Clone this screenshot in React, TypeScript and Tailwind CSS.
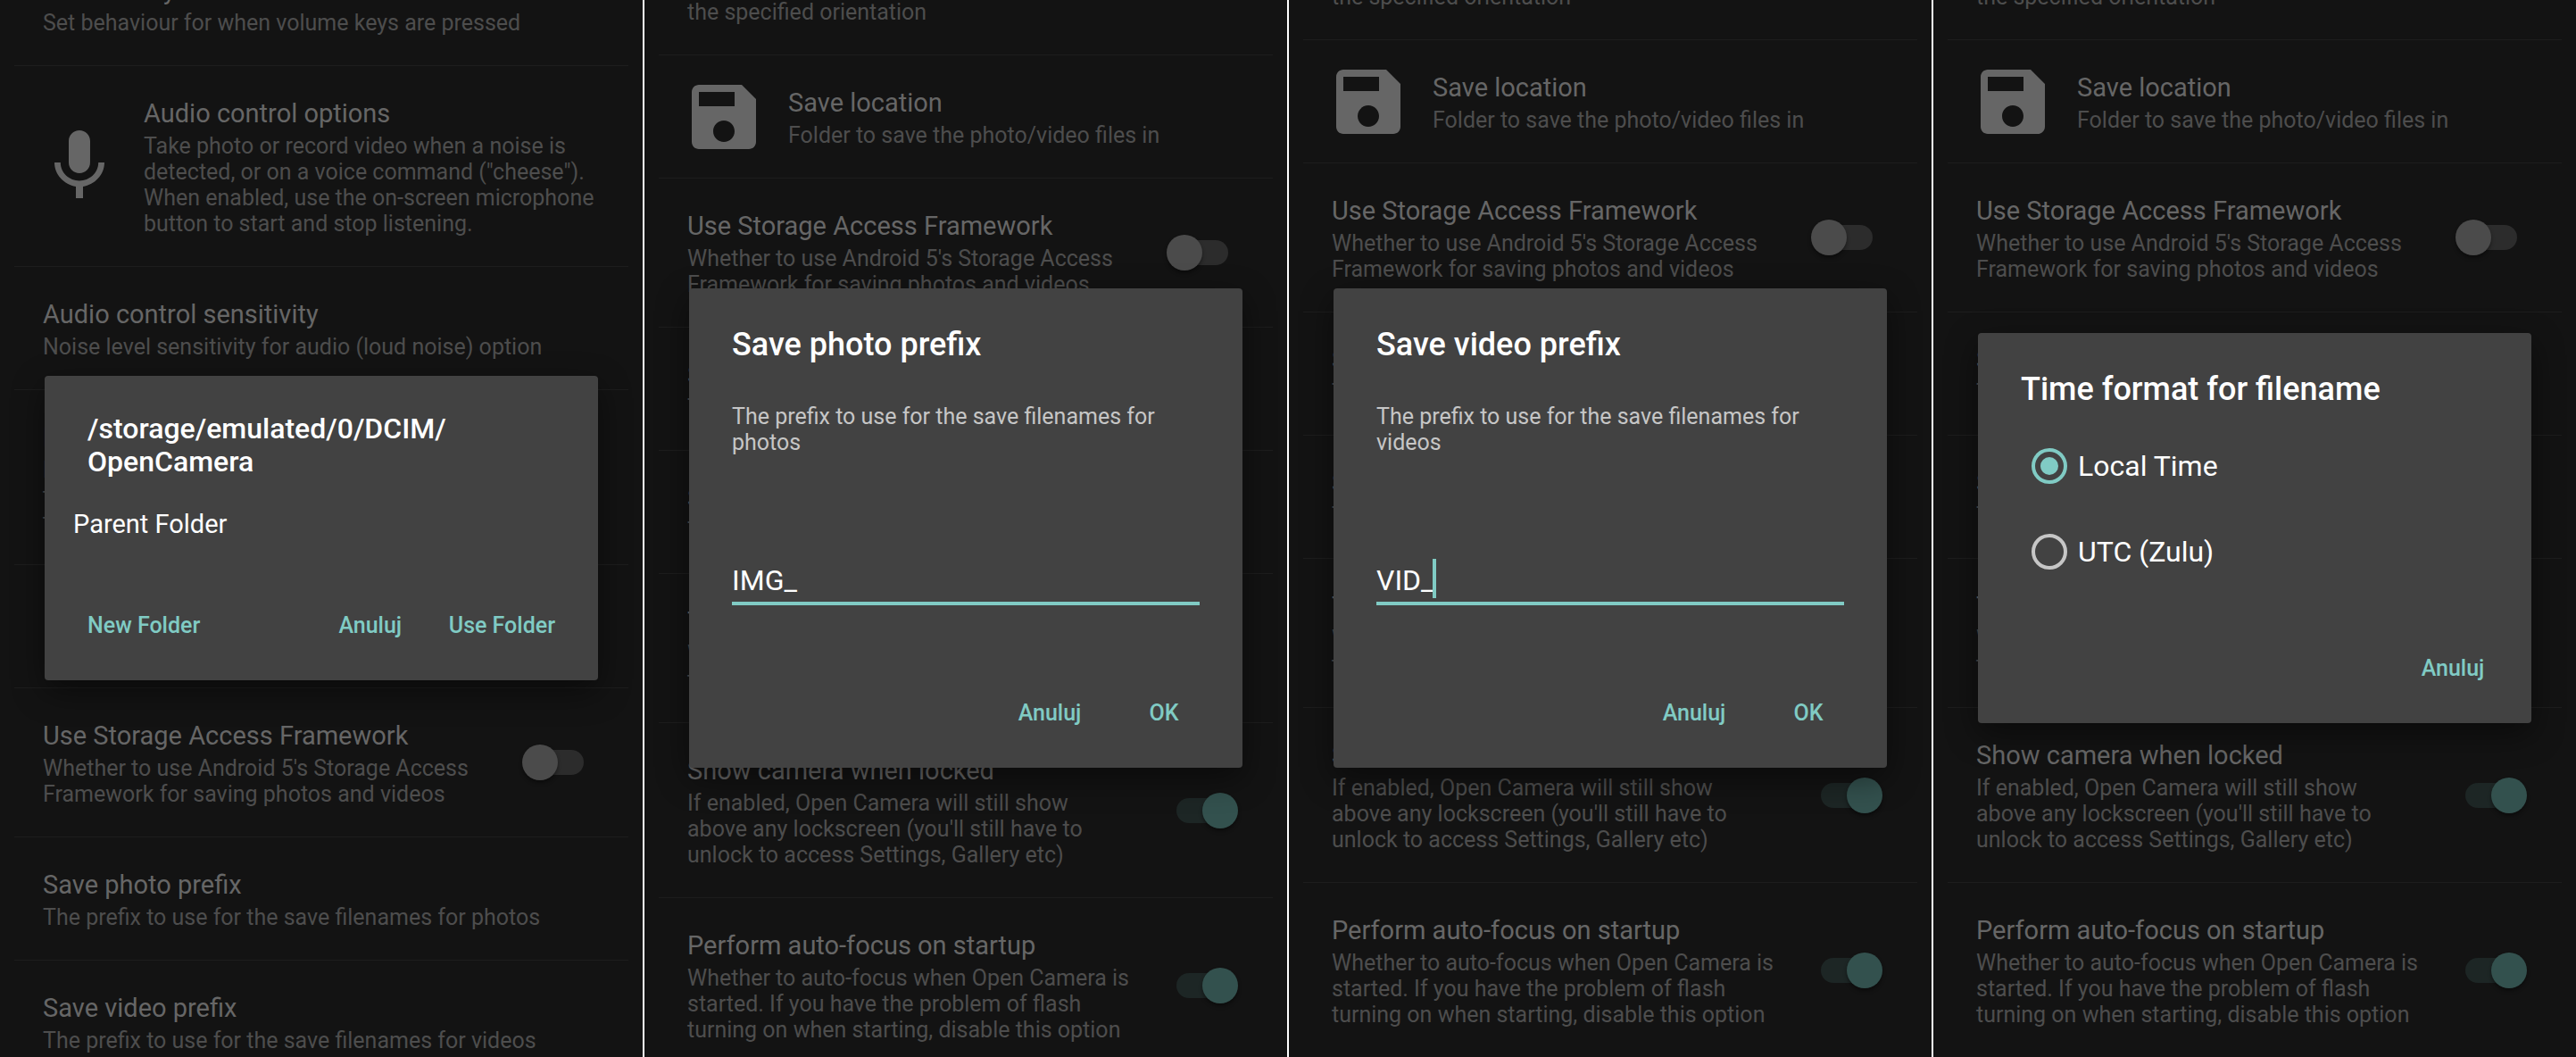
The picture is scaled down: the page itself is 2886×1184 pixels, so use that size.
import { useId, type ReactNode } from "react";

type Row = {
  title: string;
  summary: string;
  icon?: "mic" | "save";
  checked?: boolean;
};

const MIC =
  "M12 14c1.66 0 2.99-1.34 2.99-3L15 5c0-1.66-1.34-3-3-3S9 3.34 9 5v6c0 1.66 1.34 3 3 3zm5.3-3c0 3-2.54 5.1-5.3 5.1S6.7 14 6.7 11H5c0 3.41 2.72 6.23 6 6.72V21h2v-3.28c3.28-.48 6-3.3 6-6.72h-1.7z";
const SAVE =
  "M17 3H5c-1.11 0-2 .9-2 2v14c0 1.1.89 2 2 2h14c1.1 0 2-.9 2-2V7l-4-4zm-5 16c-1.66 0-3-1.34-3-3s1.34-3 3-3 3 1.34 3 3-1.34 3-3 3zm3-10H5V5h10v4z";

const orientation: Row = {
  title: "Lock photo/video orientation",
  summary:
    "Photos and videos will be recorded as if\nthe device were being held in\nthe specified orientation",
};
const saveLocation: Row = {
  title: "Save location",
  summary: "Folder to save the photo/video files in",
  icon: "save",
};
const storageAccess: Row = {
  title: "Use Storage Access Framework",
  summary:
    "Whether to use Android 5's Storage Access Framework for saving photos and videos",
  checked: false,
};
const photoPrefix: Row = {
  title: "Save photo prefix",
  summary: "The prefix to use for the save filenames for photos",
};
const videoPrefix: Row = {
  title: "Save video prefix",
  summary: "The prefix to use for the save filenames for videos",
};

const audioRows: Row[] = [
  { title: "Volume keys", summary: "Set behaviour for when volume keys are pressed" },
  {
    title: "Audio control options",
    summary:
      'Take photo or record video when a noise is detected, or on a voice command ("cheese"). When enabled, use the on-screen microphone button to start and stop listening.',
    icon: "mic",
  },
  {
    title: "Audio control sensitivity",
    summary: "Noise level sensitivity for audio (loud noise) option",
  },
  orientation,
  saveLocation,
  storageAccess,
  photoPrefix,
  videoPrefix,
];

const savingRows: Row[] = [
  orientation,
  saveLocation,
  storageAccess,
  photoPrefix,
  videoPrefix,
  {
    title: "Time format for filename",
    summary: "Whether to use local time or UTC for\nthe save filenames",
  },
  {
    title: "Show camera when locked",
    summary:
      "If enabled, Open Camera will still show above any lockscreen (you'll still have to unlock to access Settings, Gallery etc)",
    checked: true,
  },
  {
    title: "Perform auto-focus on startup",
    summary:
      "Whether to auto-focus when Open Camera is started. If you have the problem of flash turning on when starting, disable this option",
    checked: true,
  },
];

function Switch({ id, checked }: { id: string; checked: boolean }) {
  return (
    <span className="relative flex h-10 w-20 shrink-0 items-center px-[11px]">
      <input
        id={id}
        type="checkbox"
        role="switch"
        defaultChecked={checked}
        className="peer absolute inset-0 appearance-none"
      />
      <span className="h-7 w-full rounded-full bg-[#2c2c2c] peer-checked:bg-[#1d2625]" />
      <span className="pointer-events-none absolute left-0 size-10 rounded-full bg-[#4b4b4b] shadow-[0_3px_4px_rgba(0,0,0,0.4)] peer-checked:right-0 peer-checked:left-auto peer-checked:bg-[#33514e]" />
    </span>
  );
}

function Preference({ row }: { row: Row }) {
  const id = useId();
  const hasSwitch = row.checked !== undefined;
  return (
    <li
      className={`flex items-center border-t border-[#1d1d1d] ${row.icon ? "pl-[25px]" : "pl-8"} ${hasSwitch ? "pr-[39px]" : "pr-4"}`}
    >
      {row.icon && (
        <svg viewBox="0 0 24 24" className="mr-6 size-24 shrink-0 fill-[#666666]" aria-hidden="true">
          <path d={row.icon === "mic" ? MIC : SAVE} />
        </svg>
      )}
      <div className="min-w-0 grow pt-9 pb-[33px]">
        {hasSwitch ? (
          <label htmlFor={id} className="block text-[29px] leading-[34px] text-[#666666]">
            {row.title}
          </label>
        ) : (
          <h3 className="text-[29px] leading-[34px] text-[#666666]">{row.title}</h3>
        )}
        <p
          className={`mt-[5px] text-[25px] leading-[29px] whitespace-pre-line text-[#4d4d4d] ${hasSwitch ? "pr-10" : ""}`}
        >
          {row.summary}
        </p>
      </div>
      {hasSwitch && <Switch id={id} checked={!!row.checked} />}
    </li>
  );
}

function Screen({
  rows,
  scroll = "",
  children,
}: {
  rows: Row[];
  scroll?: string;
  children: ReactNode;
}) {
  return (
    <section className="relative flex h-full min-w-0 flex-col justify-end overflow-hidden bg-[#131313]">
      <ul className={`px-4 ${scroll}`}>
        {rows.map((row) => (
          <Preference key={row.title} row={row} />
        ))}
      </ul>
      <div className="absolute inset-0 flex items-center px-[50px] pb-px">{children}</div>
    </section>
  );
}

function Dialog({ label, children }: { label: string; children: ReactNode }) {
  return (
    <div
      role="dialog"
      aria-label={label}
      className="flex w-full flex-col rounded bg-[#424242] pb-[26px] text-white shadow-[0_12px_36px_rgba(0,0,0,0.45)]"
    >
      {children}
    </div>
  );
}

function DialogTitle({ children }: { children: ReactNode }) {
  return <h2 className="px-12 pt-[42px] text-[36px] leading-[42px] font-medium">{children}</h2>;
}

function DialogButton({ children, className = "" }: { children: ReactNode; className?: string }) {
  return (
    <button
      type="button"
      className={`h-18 min-w-32 px-6 text-[25px] leading-[29px] font-medium text-[#80cbc4] ${className}`}
    >
      {children}
    </button>
  );
}

function PrefixDialog({
  title,
  message,
  value,
  caret,
}: {
  title: string;
  message: string;
  value: string;
  caret?: boolean;
}) {
  const id = useId();
  return (
    <Dialog label={title}>
      <DialogTitle>{title}</DialogTitle>
      <label htmlFor={id} className="mt-[45px] px-12 text-[25px] leading-[29px] text-[#c6c6c6]">
        {message}
      </label>
      <div className="relative mx-12 mt-29 flex">
        <input
          id={id}
          type="text"
          defaultValue={value}
          className="h-[52px] w-full border-b-4 border-[#80cbc4] bg-transparent text-[32px] outline-none"
        />
        {caret && <span className="absolute top-0 left-[63px] h-11 w-1 bg-[#80cbc4]" />}
      </div>
      <div className="mt-21 flex justify-end px-6">
        <DialogButton>Anuluj</DialogButton>
        <DialogButton>OK</DialogButton>
      </div>
    </Dialog>
  );
}

function TimeOption({ label, checked }: { label: string; checked?: boolean }) {
  return (
    <label className="flex h-24 items-center gap-3 text-[32px]">
      <input
        type="radio"
        name="time-format"
        defaultChecked={checked}
        className="flex size-10 appearance-none items-center justify-center rounded-full border-4 border-[#c6c6c6] before:size-5 before:rounded-full checked:border-[#80cbc4] checked:before:bg-[#80cbc4]"
      />
      {label}
    </label>
  );
}

export default function App() {
  return (
    <main className="grid h-screen grid-cols-4 gap-0.5 overflow-hidden bg-white font-['Roboto',sans-serif]">
      <Screen rows={audioRows} scroll="-mb-[29px]">
        <Dialog label="Choose folder">
          <h2 className="px-12 pt-[41px] text-[32px] leading-[37px] font-medium">
            /storage/emulated/0/DCIM/
            <wbr />
            OpenCamera
          </h2>
          <button type="button" className="mt-1 h-24 px-8 text-left text-[29px]">
            Parent Folder
          </button>
          <div className="mt-7 flex px-6">
            <DialogButton className="mr-auto">New Folder</DialogButton>
            <DialogButton>Anuluj</DialogButton>
            <DialogButton>Use Folder</DialogButton>
          </div>
        </Dialog>
      </Screen>
      <Screen rows={savingRows} scroll="-mb-[17px]">
        <PrefixDialog
          title="Save photo prefix"
          message="The prefix to use for the save filenames for photos"
          value="IMG_"
        />
      </Screen>
      <Screen rows={savingRows}>
        <PrefixDialog
          title="Save video prefix"
          message="The prefix to use for the save filenames for videos"
          value="VID_"
          caret
        />
      </Screen>
      <Screen rows={savingRows}>
        <Dialog label="Time format for filename">
          <DialogTitle>Time format for filename</DialogTitle>
          <fieldset className="mt-[17px] px-15">
            <legend className="sr-only">Time format for filename</legend>
            <TimeOption label="Local Time" checked />
            <TimeOption label="UTC (Zulu)" />
          </fieldset>
          <div className="mt-[46px] flex justify-end px-6">
            <DialogButton>Anuluj</DialogButton>
          </div>
        </Dialog>
      </Screen>
    </main>
  );
}
